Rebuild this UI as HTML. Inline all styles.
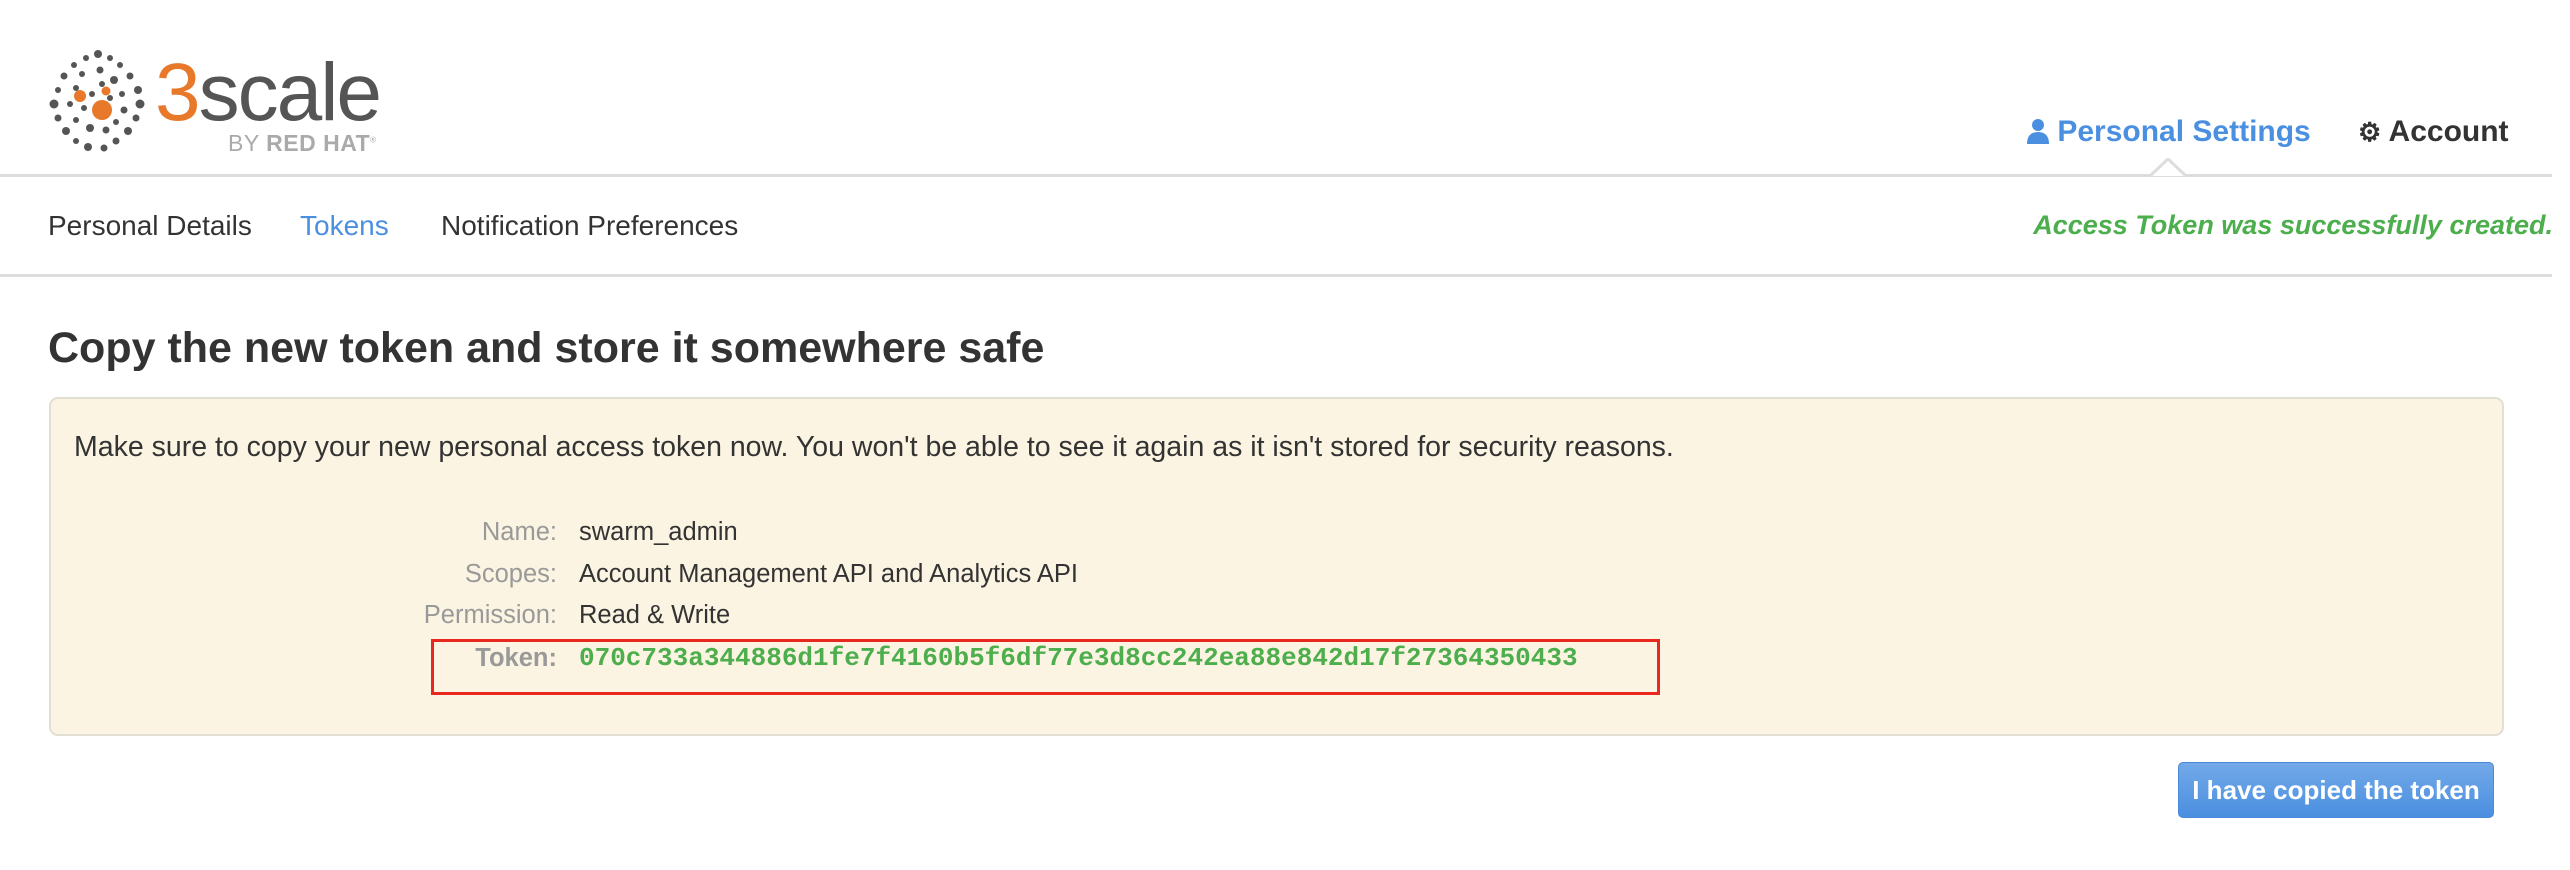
<!DOCTYPE html>
<html><head><meta charset="utf-8"><style>
*{margin:0;padding:0;box-sizing:border-box}
body{width:2570px;height:870px;background:#fff;font-family:"Liberation Sans",sans-serif;color:#333;position:relative;overflow:hidden}
.a{position:absolute;white-space:nowrap}
.line{position:absolute;left:0;width:2552px;height:3px;background:#ddd}
</style></head><body>
<svg class="a" style="left:46px;top:48px" width="110" height="106" viewBox="0 0 110 106">
<g fill="#555">
<circle cx="52" cy="6" r="4"/><circle cx="40" cy="10" r="3"/><circle cx="64" cy="10" r="3"/><circle cx="28" cy="17" r="3"/><circle cx="74" cy="17" r="3"/>
<circle cx="18" cy="28" r="3.5"/><circle cx="84" cy="28" r="3.5"/><circle cx="12" cy="42" r="3"/><circle cx="92" cy="42" r="4"/>
<circle cx="8" cy="56" r="4.5"/><circle cx="94" cy="56" r="4.5"/><circle cx="12" cy="70" r="3.5"/><circle cx="90" cy="70" r="3.5"/>
<circle cx="20" cy="83" r="4"/><circle cx="82" cy="83" r="4"/><circle cx="30" cy="93" r="3"/><circle cx="70" cy="93" r="3.5"/>
<circle cx="42" cy="99" r="4"/><circle cx="58" cy="100" r="3.5"/>
<circle cx="36" cy="26" r="3"/><circle cx="54" cy="22" r="3.5"/><circle cx="68" cy="32" r="4"/><circle cx="30" cy="40" r="3"/>
<circle cx="76" cy="46" r="3"/><circle cx="24" cy="56" r="3"/><circle cx="78" cy="62" r="3.5"/><circle cx="30" cy="72" r="3"/>
<circle cx="44" cy="80" r="4"/><circle cx="60" cy="82" r="3.5"/><circle cx="70" cy="74" r="3"/><circle cx="46" cy="46" r="3"/><circle cx="56" cy="36" r="3"/><circle cx="38" cy="60" r="3"/><circle cx="64" cy="50" r="3"/>
</g>
<g fill="#e8792b"><circle cx="34" cy="48" r="6"/><circle cx="60" cy="43" r="4.5"/><circle cx="56" cy="62" r="10"/></g>
</svg>
<div class="a" style="left:155px;top:52px;font-size:82px;line-height:82px;letter-spacing:-2px;color:#555"><span style="color:#e8792b">3</span>scale</div>
<div class="a" style="left:228px;top:130px;font-size:23px;color:#aaa;letter-spacing:0.5px">BY <b>RED HAT</b><sup style="font-size:8px">®</sup></div>

<div class="a" style="left:2027px;top:115px;font-size:30px;font-weight:bold;color:#4a8fe0"><svg width="22" height="26" viewBox="0 0 22 26" style="vertical-align:-3px"><circle cx="11" cy="7" r="6" fill="#4a8fe0"/><path d="M0 26 Q0 14 11 14 Q22 14 22 26Z" fill="#4a8fe0"/></svg> Personal Settings</div>
<div class="a" style="left:2358px;top:115px;font-size:30px;font-weight:bold;color:#333"><span style="font-size:26px">⚙</span> Account</div>
<div class="line" style="top:174px"></div>
<svg class="a" style="left:2150px;top:158px" width="36" height="20"><path d="M0 18 L18 1 L36 18" fill="#fff" stroke="#ddd" stroke-width="3"/></svg>

<div class="a" style="left:48px;top:210px;font-size:28px;color:#333">Personal Details</div>
<div class="a" style="left:300px;top:210px;font-size:28px;color:#4a8fe0">Tokens</div>
<div class="a" style="left:441px;top:210px;font-size:28px;color:#333">Notification Preferences</div>
<div class="a" style="right:17px;top:210px;font-size:27px;font-weight:bold;font-style:italic;color:#4cae4c">Access Token was successfully created.</div>
<div class="line" style="top:274px"></div>

<div class="a" style="left:48px;top:324px;font-size:43px;font-weight:bold;color:#333">Copy the new token and store it somewhere safe</div>
<div class="a" style="left:49px;top:397px;width:2455px;height:339px;background:#fcf4e2;border:2px solid #e3ded2;border-radius:9px"></div>
<div class="a" style="left:74px;top:431px;font-size:28.5px">Make sure to copy your new personal access token now. You won't be able to see it again as it isn't stored for security reasons.</div>

<div class="a" style="right:2013px;top:518px;font-size:25.5px;color:#999;text-align:right">Name:</div>
<div class="a" style="left:579px;top:518px;font-size:25.5px">swarm_admin</div>
<div class="a" style="right:2013px;top:560px;font-size:25.5px;color:#999">Scopes:</div>
<div class="a" style="left:579px;top:560px;font-size:25.5px">Account Management API and Analytics API</div>
<div class="a" style="right:2013px;top:601px;font-size:25.5px;color:#999">Permission:</div>
<div class="a" style="left:579px;top:601px;font-size:25.5px">Read &amp; Write</div>
<div class="a" style="right:2013px;top:644px;font-size:25.5px;color:#999;font-weight:bold">Token:</div>
<div class="a" style="left:579px;top:643px;font-size:26px;font-weight:bold;color:#4cae4c;font-family:'Liberation Mono',monospace">070c733a344886d1fe7f4160b5f6df77e3d8cc242ea88e842d17f27364350433</div>
<div class="a" style="left:431px;top:639px;width:1229px;height:56px;border:3px solid #e8271f"></div>

<div class="a" style="left:2178px;top:762px;width:316px;height:56px;border-radius:5px;background:linear-gradient(#73a9e8,#4a8fe0);border:1px solid #4a8ad8;color:#fff;font-weight:bold;font-size:26px;text-align:center;line-height:54px">I have copied the token</div>
</body></html>
